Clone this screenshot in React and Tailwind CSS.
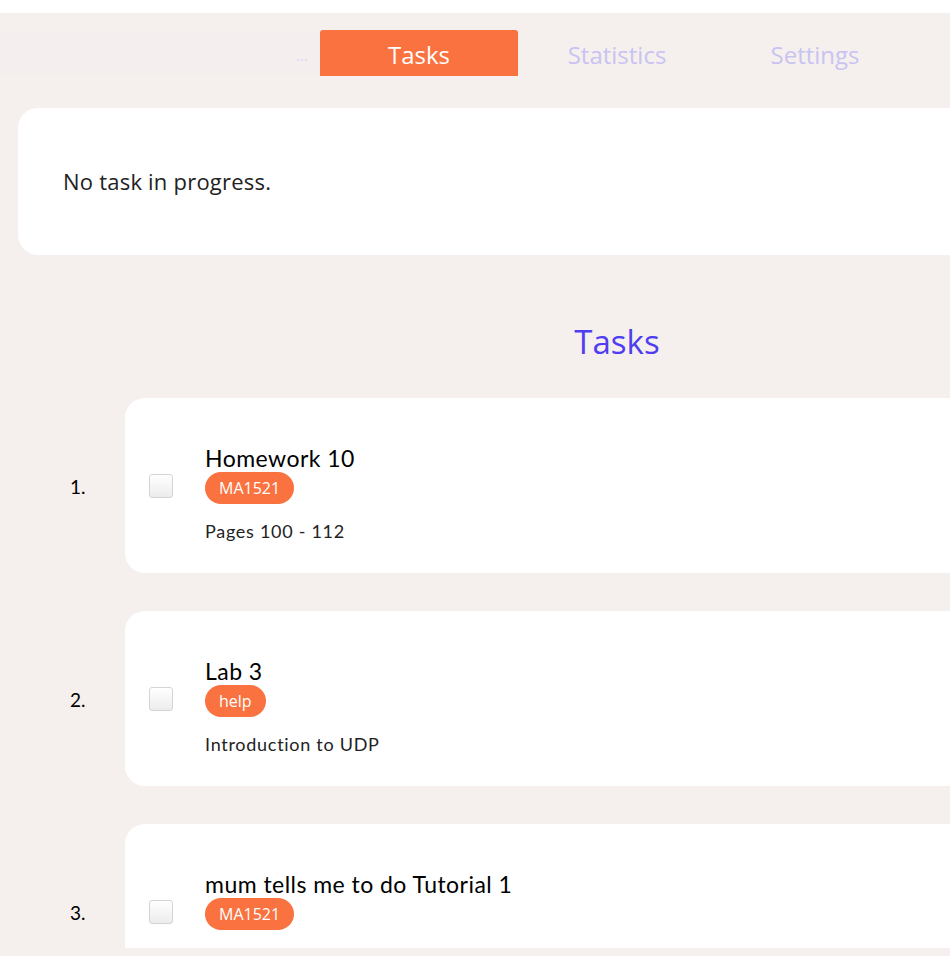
const tasks = [
  { title: 'Homework 10', tag: 'MA1521', desc: 'Pages 100 - 112' },
  { title: 'Lab 3', tag: 'help', desc: 'Introduction to UDP' },
  { title: 'mum tells me to do Tutorial 1', tag: 'MA1521', desc: '' },
];

function TaskRow({ index, task }) {
  return (
    <div className="flex items-center">
      <div className="w-[125px] shrink-0 pl-[70px] pt-[3px] text-[19px] text-black font-['Lato',sans-serif]">
        {index}.
      </div>
      <div className="flex h-[175px] w-[984px] shrink-0 items-center rounded-[20px] bg-white pl-6">
        <span className="h-6 w-6 shrink-0 rounded-[3px] border border-[#d4d4d4] bg-gradient-to-b from-white to-[#ececec]" />
        <div className="ml-8 flex flex-col self-start pt-[46px]">
          <div className="text-[23px] leading-7 tracking-[0.02em] text-black font-['Lato',sans-serif]">{task.title}</div>
          <div>
            <span className="inline-flex h-8 items-center rounded-full bg-[#f97240] px-[14px] text-[16px] text-white font-['Open_Sans',sans-serif]">
              {task.tag}
            </span>
          </div>
          {task.desc && (
            <div className="mt-[15px] text-[18px] leading-6 tracking-[0.04em] text-[#222] font-['Lato',sans-serif]">
              {task.desc}
            </div>
          )}
        </div>
      </div>
    </div>
  );
}

export default function App() {
  return (
    <div className="h-[956px] w-[950px] overflow-hidden bg-white">
      <div className="h-[13px] bg-white" />
      <div className="flex h-[943px] w-[1234px] flex-col bg-[#f5f0ee] font-['Open_Sans',sans-serif]">
        <div className="mt-[17px] flex h-[46px] shrink-0">
          <div className="flex w-[320px] items-center justify-end bg-[#f4eeee] pr-3 pt-1 text-[15px] text-[#ddd6f3]">...</div>
          <div className="flex w-[198px] items-center justify-center rounded-t-[3px] bg-[#f97240] pt-1 text-[24px] text-white">
            Tasks
          </div>
          <div className="flex w-[198px] items-center justify-center pt-1 text-[24px] text-[#c9c3f1]">Statistics</div>
          <div className="flex w-[198px] items-center justify-center pt-1 text-[24px] text-[#c9c3f1]">Settings</div>
        </div>
        <div className="h-[872px] shrink-0 overflow-hidden">
          <div className="mx-[18px] mt-8 flex h-[147px] items-center rounded-[20px] bg-white pl-[45px] text-[22px] tracking-[0.01em] text-[#222]">
            No task in progress.
          </div>
          <h1 className="mt-[62px] text-center text-[33px] leading-[50px] text-[#4f3df0]">Tasks</h1>
          <div className="mt-[31px] flex flex-col gap-[38px]">
            {tasks.map((t, i) => (
              <TaskRow key={i} index={i + 1} task={t} />
            ))}
          </div>
        </div>
      </div>
    </div>
  );
}
